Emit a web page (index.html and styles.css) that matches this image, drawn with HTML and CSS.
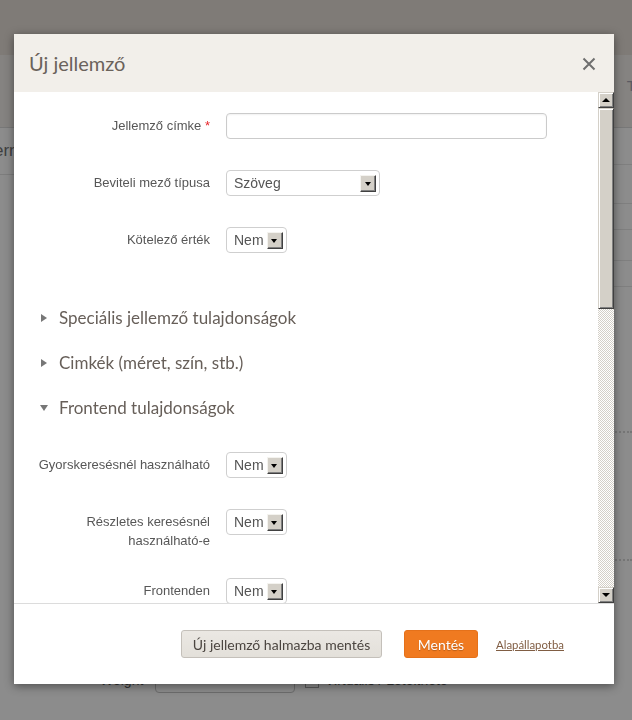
FILE: index.html
```html
<!DOCTYPE html>
<html lang="hu">
<head>
<meta charset="utf-8">
<title>Új jellemző</title>
<link rel="stylesheet" href="styles.css">
</head>
<body>
<div class="page">
  <div class="topbar"></div>
  <div class="subnav"><span class="subnav-t">T</span></div>
  <div class="content">
    <div class="side">
      <div class="side-item">err</div>
    </div>
    <div class="main">
      <div class="trow h37"></div>
      <div class="trow h39"></div>
      <div class="trow h26"></div>
      <div class="trow h31"></div>
      <div class="trow h26"></div>
      <div class="dotrow h145"></div>
      <div class="dotrow h127"></div>
      <div class="bg-form">
        <span class="bg-label">Weight</span>
        <span class="bg-input"></span>
        <span class="bg-check"></span>
        <span class="bg-text">Virtuális / Letölthető</span>
      </div>
    </div>
  </div>
</div>

<div class="modal">
  <div class="modal-header">
    <h2 class="modal-title">Új jellemző</h2>
    <span class="close">
      <svg width="14" height="14" viewBox="0 0 14 14"><path d="M1.5 1.5 L12.5 12.5 M12.5 1.5 L1.5 12.5" stroke="#6f6f6f" stroke-width="2" fill="none"/></svg>
    </span>
  </div>
  <div class="modal-body">
    <div class="scroll-content">
      <div class="form-row">
        <label class="lbl">Jellemző címke <span class="req">*</span></label>
        <span class="text-input"></span>
      </div>
      <div class="form-row">
        <label class="lbl">Beviteli mező típusa</label>
        <span class="select wide"><span class="sel-val">Szöveg</span><span class="dd"></span></span>
      </div>
      <div class="form-row last">
        <label class="lbl">Kötelező érték</label>
        <span class="select"><span class="sel-val">Nem</span><span class="dd"></span></span>
      </div>

      <div class="section"><span class="tri-box"><span class="tri-right"></span></span>Speciális jellemző tulajdonságok</div>
      <div class="section"><span class="tri-box"><span class="tri-right"></span></span>Cimkék (méret, szín, stb.)</div>
      <div class="section open"><span class="tri-box"><span class="tri-down"></span></span>Frontend tulajdonságok</div>

      <div class="form-row">
        <label class="lbl">Gyorskeresésnél használható</label>
        <span class="select"><span class="sel-val">Nem</span><span class="dd"></span></span>
      </div>
      <div class="form-row double">
        <label class="lbl">Részletes keresésnél<br>használható-e</label>
        <span class="select"><span class="sel-val">Nem</span><span class="dd"></span></span>
      </div>
      <div class="form-row">
        <label class="lbl">Frontenden</label>
        <span class="select"><span class="sel-val">Nem</span><span class="dd"></span></span>
      </div>
    </div>
    <div class="scrollbar">
      <span class="sb-btn"><span class="sb-up"></span></span>
      <span class="sb-thumb"></span>
      <span class="sb-track"></span>
      <span class="sb-btn"><span class="sb-down"></span></span>
    </div>
  </div>
  <div class="modal-footer">
    <button class="btn btn-light">Új jellemző halmazba mentés</button>
    <button class="btn btn-orange">Mentés</button>
    <a class="reset-link" href="#">Alapállapotba</a>
  </div>
</div>
</body>
</html>
```
FILE: styles.css
```css
html, body {
  margin: 0;
  padding: 0;
}
body {
  background: #8c8c8c;
  font-family: "Liberation Sans", Arial, sans-serif;
  width: 632px;
  height: 720px;
  overflow: hidden;
}

/* ---------- dimmed background page ---------- */
.page {
  height: 720px;
}
.topbar {
  height: 55px;
  background: #7f7b77;
}
.subnav {
  height: 72px;
  background: #858381;
  border-bottom: 1px solid #787878;
  display: flex;
  justify-content: flex-end;
  align-items: flex-start;
}
.subnav-t {
  margin-top: 22px;
  margin-right: -4px;
  color: #5a5a62;
  font-size: 15px;
}
.content {
  display: flex;
}
.side {
  width: 40px;
  flex: none;
}
.side-item {
  height: 46px;
  border-bottom: 1px solid #7d7d7d;
  line-height: 46px;
  font-size: 17px;
  color: #3f3f3f;
  margin-left: -6px;
}
.main {
  flex: 1;
}
.trow {
  border-bottom: 1px solid #7f7f7f;
}
.h37 { height: 36px; }
.h39 { height: 38px; }
.h26 { height: 25px; }
.h31 { height: 30px; }
.h145 { height: 144px; }
.h127 { height: 126px; }
.dotrow {
  border-bottom: 2px dotted #767676;
}
.bg-form {
  display: flex;
  align-items: flex-end;
  height: 132px;
  padding-left: 60px;
}
.bg-label {
  width: 45px;
  color: #333;
  font-size: 14px;
  margin-bottom: 5px;
}
.bg-input {
  width: 138px;
  height: 30px;
  border: 1px solid #6c6c6c;
  border-radius: 4px;
  margin-left: 10px;
}
.bg-check {
  width: 12px;
  height: 12px;
  border: 1px solid #5a5a5a;
  margin-left: 10px;
  margin-bottom: 5px;
}
.bg-text {
  margin-left: 6px;
  color: #333;
  font-size: 14px;
  margin-bottom: 5px;
}

/* ---------- modal ---------- */
.modal {
  position: fixed;
  left: 14px;
  top: 34px;
  width: 600px;
  height: 650px;
  background: #fff;
  box-shadow: 0 2px 9px rgba(0, 0, 0, 0.45);
  display: flex;
  flex-direction: column;
}
.modal-header {
  height: 58px;
  flex: none;
  background: #f2efea;
  display: flex;
  align-items: center;
  justify-content: space-between;
  padding: 0 18px 0 15px;
}
.modal-title {
  margin: 0;
  font-family: Lato, "Open Sans", sans-serif;
  font-weight: 400;
  font-size: 20px;
  color: #6a625b;
}
.close {
  display: flex;
  width: 14px;
  height: 14px;
  margin-top: 2px;
}

.modal-body {
  height: 511px;
  flex: none;
  display: flex;
  overflow: hidden;
}
.scroll-content {
  flex: 1;
  padding-top: 21px;
  overflow: hidden;
}

.form-row {
  display: flex;
  align-items: flex-start;
  margin-bottom: 31px;
}
.form-row.last {
  margin-bottom: 42px;
}
.form-row.double {
  margin-bottom: 28px;
}
.lbl {
  width: 196px;
  flex: none;
  text-align: right;
  padding-top: 3px;
  line-height: 19px;
  font-size: 13px;
  color: #575757;
  margin-right: 16px;
}
.req {
  color: #e8262b;
}
.text-input {
  display: block;
  width: 319px;
  height: 24px;
  border: 1px solid #cbcbcb;
  border-radius: 4px;
  box-shadow: inset 0 1px 2px rgba(0, 0, 0, 0.06);
}
.select {
  display: flex;
  align-items: center;
  height: 24px;
  border: 1px solid #cfcfcf;
  border-radius: 4px;
  padding: 0 3px 0 7px;
  background: #fff;
}
.select.wide {
  width: 142px;
  justify-content: space-between;
}
.sel-val {
  font-size: 14px;
  color: #555;
  margin-right: 3px;
}
.dd {
  width: 16px;
  height: 17px;
  box-sizing: border-box;
  background: #d4d0c8;
  border: 1px solid;
  border-color: #f4f3ef #404040 #404040 #f4f3ef;
  box-shadow: inset -1px -1px 0 #808080;
  display: flex;
  align-items: center;
  justify-content: center;
}
.dd::after {
  content: "";
  border-left: 3.5px solid transparent;
  border-right: 3.5px solid transparent;
  border-top: 4px solid #000;
  margin: 1px 1px 0 0;
}

.section {
  height: 45px;
  display: flex;
  align-items: center;
  padding-left: 26px;
  font-family: Lato, "Open Sans", sans-serif;
  font-size: 17px;
  color: #675f59;
}
.section.open {
  margin-bottom: 22px;
}
.tri-box {
  width: 8px;
  height: 9px;
  display: flex;
  align-items: center;
  justify-content: center;
  margin-right: 11px;
}
.tri-right {
  border-top: 4px solid transparent;
  border-bottom: 4px solid transparent;
  border-left: 6px solid #777;
}
.tri-down {
  border-left: 4px solid transparent;
  border-right: 4px solid transparent;
  border-top: 6px solid #777;
}

/* classic scrollbar */
.scrollbar {
  width: 16px;
  flex: none;
  display: flex;
  flex-direction: column;
}
.sb-btn, .sb-thumb {
  box-sizing: border-box;
  background: #d4d0c8;
  border: 1px solid;
  border-color: #d4d0c8 #404040 #404040 #d4d0c8;
  box-shadow: inset 1px 1px 0 #fff, inset -1px -1px 0 #808080;
}
.sb-btn {
  height: 16px;
  flex: none;
  display: flex;
  align-items: center;
  justify-content: center;
}
.sb-thumb {
  height: 201px;
  flex: none;
}
.sb-track {
  flex: 1;
  background-color: #fff;
  background-image: repeating-conic-gradient(#d4d0c8 0 25%, #fff 0 50%);
  background-size: 2px 2px;
}
.sb-up {
  border-left: 4px solid transparent;
  border-right: 4px solid transparent;
  border-bottom: 4px solid #000;
}
.sb-down {
  border-left: 4px solid transparent;
  border-right: 4px solid transparent;
  border-top: 4px solid #000;
}

/* footer */
.modal-footer {
  flex: 1;
  border-top: 1px solid #dcdcdc;
  display: flex;
  align-items: center;
  justify-content: flex-end;
  padding-right: 50px;
}
.btn {
  height: 28px;
  border-radius: 3px;
  font-family: Lato, "Open Sans", sans-serif;
  font-size: 14px;
  padding: 0;
  cursor: pointer;
}
.btn-light {
  width: 201px;
  background: linear-gradient(#ebe8e3, #e3e0da);
  border: 1px solid #c4c0ba;
  color: #4b4540;
  margin-right: 22px;
}
.btn-orange {
  width: 74px;
  background: #f07a20;
  border: 1px solid #e5711a;
  color: #fff;
  text-shadow: 0 1px 1px rgba(0, 0, 0, 0.25);
  margin-right: 18px;
}
.reset-link {
  font-family: Lato, "Open Sans", sans-serif;
  font-size: 11.4px;
  color: #805d43;
  text-decoration: underline;
}
```
